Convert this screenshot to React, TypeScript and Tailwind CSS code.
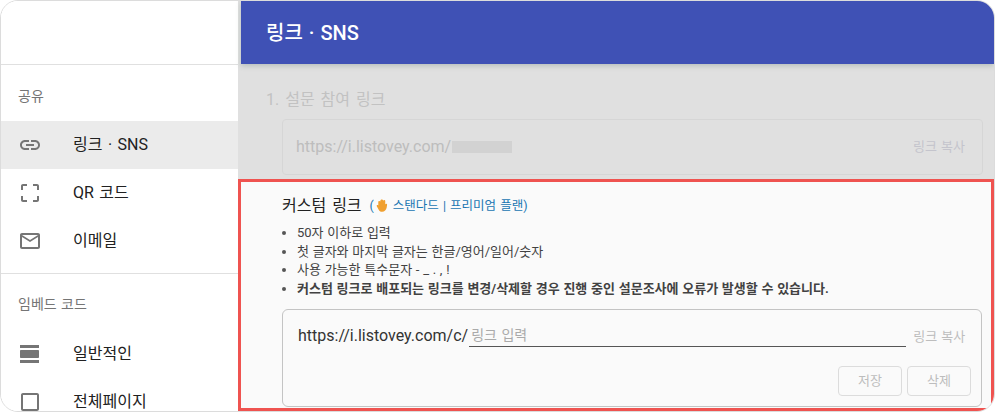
const P = {
  link: "M3.9 12c0-1.71 1.39-3.1 3.1-3.1h4V7H7c-2.76 0-5 2.24-5 5s2.24 5 5 5h4v-1.9H7c-1.71 0-3.1-1.39-3.1-3.1zM8 13h8v-2H8v2zm9-6h-4v1.9h4c1.71 0 3.1 1.39 3.1 3.1s-1.39 3.1-3.1 3.1h-4V17h4c2.76 0 5-2.24 5-5s-2.24-5-5-5z",
  qr: "M3 5v4h2V5h4V3H5c-1.1 0-2 .9-2 2zm2 10H3v4c0 1.1.9 2 2 2h4v-2H5v-4zm14 4h-4v2h4c1.1 0 2-.9 2-2v-4h-2v4zm0-16h-4v2h4v4h2V5c0-1.1-.9-2-2-2z",
  mail: "M20 4H4c-1.1 0-1.99.9-1.99 2L2 18c0 1.1.9 2 2 2h16c1.1 0 2-.9 2-2V6c0-1.1-.9-2-2-2zm0 14H4V8l8 5 8-5v10zm-8-7L4 6h16l-8 5z",
  day: "M2 21h19v-3H2v3zM20 8H3c-.55 0-1 .45-1 1v6c0 .55.45 1 1 1h17c.55 0 1-.45 1-1V9c0-.55-.45-1-1-1zM2 3v3h19V3H2z",
  box: "M19 5v14H5V5h14m0-2H5c-1.1 0-2 .9-2 2v14c0 1.1.9 2 2 2h14c1.1 0 2-.9 2-2V5c0-1.1-.9-2-2-2z",
};

function Row({ d, label, active }: { d: string; label: string; active?: boolean }) {
  return (
    <div className={`flex h-12 shrink-0 items-center pl-[17px] ${active ? "bg-[#ebebeb]" : ""}`}>
      <svg viewBox="0 0 24 24" className="h-6 w-6 shrink-0 fill-[#757575]">
        <path d={d} />
      </svg>
      <span className="ml-[31px] text-base text-[#212121] [word-spacing:1.5px]">{label}</span>
    </div>
  );
}

function Hand() {
  return (
    <svg viewBox="0 0 12 14" className="ml-[2px] mr-[5px] inline-block h-[13px] w-[12px] align-[-2px]">
      <path
        fill="#f0a030"
        d="M2 3c0-1.300 2-1.300 2 0 0-2 1-2.500 1.700-2.500S7.200 1 7.200 2c.2-1.300 2.300-1.100 2.300.3v3.500c.3-1 2-.7 2 .5L11 9.500C10.500 12 8.800 13.800 6.200 13.800c-2 0-3.200-1-3.900-2.500L.4 7.800c-.5-1.100.9-1.900 1.600-.9z"
      />
    </svg>
  );
}

export default function App() {
  return (
    <div
      className="h-[412px] w-[995px] overflow-hidden bg-white"
      style={{ fontFamily: 'Roboto, "Noto Sans CJK KR", sans-serif' }}
    >
      <div className="flex h-[412px] w-[995px] overflow-hidden rounded-[18px] border border-[#dcdcdc] bg-white">
        <aside className="flex h-full w-[237px] shrink-0 flex-col overflow-hidden bg-white">
          <div className="h-[64px] shrink-0 border-b border-[#e0e0e0]" />
          <div className="flex h-[56px] shrink-0 items-center pl-[17px] pt-[5px] text-sm text-[#757575]">공유</div>
          <Row d={P.link} label="링크 · SNS" active />
          <Row d={P.qr} label="QR 코드" />
          <Row d={P.mail} label="이메일" />
          <div className="mt-2 h-px shrink-0 bg-[#e0e0e0]" />
          <div className="flex h-[56px] shrink-0 items-center pl-[17px] pt-[4px] text-sm text-[#757575] [word-spacing:1px]">임베드 코드</div>
          <Row d={P.day} label="일반적인" />
          <Row d={P.box} label="전체페이지" />
        </aside>

        <main className="flex h-full min-w-0 flex-1 flex-col bg-[#e0e0e0]">
          <header className="ml-[3px] flex h-[63px] shrink-0 items-center bg-[#3f51b5] pl-[25px] text-xl font-medium text-white shadow-[0_2px_5px_rgba(90,120,110,0.3)] [word-spacing:1px]">
            링크 · SNS
          </header>

          <section className="h-[115px] shrink-0 pl-[28px] pr-[11px] pt-[25px]">
            <div className="text-base leading-[22px] text-[#c2c2c2] [word-spacing:2px]">1. 설문 참여 링크</div>
            <div className="ml-[16px] mt-[8px] flex h-[56px] items-center rounded border border-[#d6d6d6] pl-[13px] pr-[17px]">
              <span className="text-base text-[#bdbdbd]">https://i.listovey.com/</span>
              <span className="ml-[1px] h-[12px] w-[60px] bg-[#d2d2d2]" />
              <span className="ml-auto text-[13px] text-[#c4c4cc] [word-spacing:1px]">링크 복사</span>
            </div>
          </section>

          <section className="h-[232px] shrink-0 border-[3px] border-[#ef5350] bg-[#fafafa] pl-[41px] pr-[9px] pt-[12px] text-[#424242]">
            <div className="flex h-[24px] items-center">
              <span className="text-base text-[#212121] [word-spacing:2px]">커스텀 링크</span>
              <span className="ml-[8px] text-[12.5px] text-[#1976b2] [word-spacing:1px]">
                (<Hand />스탠다드 | 프리미엄 플랜)
              </span>
            </div>
            <ul className="ml-[15px] mt-[6px] list-disc text-[13px] leading-[18.7px] marker:text-[#555555] [word-spacing:0.5px]">
              <li>50자 이하로 입력</li>
              <li>첫 글자와 마지막 글자는 한글/영어/일어/숫자</li>
              <li>사용 가능한 특수문자 - _ . , !</li>
              <li className="font-bold">커스텀 링크로 배포되는 링크를 변경/삭제할 경우 진행 중인 설문조사에 오류가 발생할 수 있습니다.</li>
            </ul>
            <div className="mt-[10px] h-[98px] rounded-md border border-[#c4c4c4] pl-[15px] pr-[10px]">
              <div className="flex h-[38px] items-start pt-[15px]">
                <span className="text-base leading-[22px] text-[#333333]">https://i.listovey.com/c/</span>
                <span className="ml-[1px] h-[22px] w-[437px] border-b border-[#555555] pl-[2px] text-sm leading-[21px] text-[#aaaaaa] [word-spacing:1px]">
                  링크 입력
                </span>
                <span className="ml-[7px] text-[13px] leading-[24px] text-[#bdbdbd] [word-spacing:1px]">링크 복사</span>
              </div>
              <div className="mt-[18px] flex justify-end gap-[5px]">
                <button className="h-[30px] w-[64px] rounded border border-[#dcdcdc] text-[13px] text-[#bdbdbd]">저장</button>
                <button className="h-[30px] w-[64px] rounded border border-[#dcdcdc] text-[13px] text-[#bdbdbd]">삭제</button>
              </div>
            </div>
          </section>
        </main>
      </div>
    </div>
  );
}
